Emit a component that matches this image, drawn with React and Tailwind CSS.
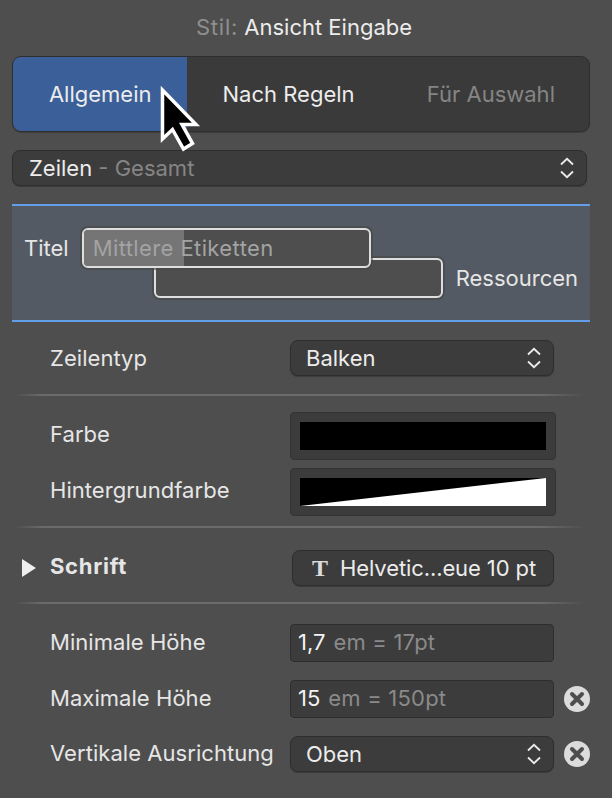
import React from 'react';

const font = { fontFamily: 'Inter, "Liberation Sans", sans-serif' };

function Stepper() {
  return (
    <svg width="14" height="22" viewBox="0 0 14 22" fill="none" stroke="#ececec" strokeWidth="1.8" className="shrink-0">
      <path d="M1 7.5 7 1.8l6 5.7" />
      <path d="M1 14.5l6 5.7 6-5.7" />
    </svg>
  );
}

function ClearButton() {
  return (
    <svg width="26" height="26" viewBox="0 0 26 26" className="shrink-0">
      <circle cx="13" cy="13" r="13" fill="#dcdcdc" />
      <path d="M8 8l10 10M18 8 8 18" stroke="#4e4e4e" strokeWidth="4" strokeLinecap="round" />
    </svg>
  );
}

function Select({ label, className }) {
  return (
    <div className={`flex items-center justify-between rounded-lg border border-[#2e2e2e] bg-[#3c3c3c] shadow-[0_1px_1px_rgba(0,0,0,0.25)] text-[#ececec] ${className}`}>
      {label}
      <Stepper />
    </div>
  );
}

function Divider() {
  return <div className="ml-[15px] h-[2px] w-[570px] bg-[linear-gradient(90deg,transparent,#6b6b6b_5%,#6b6b6b_92%,transparent)]" />;
}

function Row({ label, className, labelClass = '', children }) {
  return (
    <div className={`flex items-center ${className}`}>
      <span className={`ml-[50px] w-[240px] shrink-0 tracking-[0.05px] text-[#e6e6e6] ${labelClass}`}>{label}</span>
      {children}
    </div>
  );
}

function ColorWell({ children }) {
  return (
    <div className="h-[48px] w-[266px] rounded-[4px] border border-[#333] bg-[#3c3c3c] p-[9px]">
      <div className="h-[28px] w-[246px] bg-black">{children}</div>
    </div>
  );
}

function NumberField({ value, unit }) {
  return (
    <div className="flex h-[38px] w-[264px] items-center gap-[8px] rounded-[4px] border border-[#2e2e2e] bg-[#3c3c3c] pb-[2px] pl-[7px]">
      <span className="text-[#f2f2f2]">{value}</span>
      <span className="tracking-[0.2px] text-[#8a8a8a]">{unit}</span>
    </div>
  );
}

function Cursor() {
  return (
    <svg width="46" height="70" viewBox="0 0 46 70" className="absolute left-[158px] top-[84px] z-20">
      <path d="M4.5 6V55L14.5 45.5 25.5 65 34.5 59.5 24 40.5H38Z" fill="#000" stroke="#fff" strokeWidth="3.5" />
    </svg>
  );
}

export default function App() {
  return (
    <div className="relative h-[798px] w-[612px] overflow-hidden bg-[#4e4e4e] text-[22px] leading-none" style={font}>
      <div className="flex h-[56px] items-center justify-center gap-[6px] pb-[2px] pr-[4px]">
        <span className="tracking-[0.8px] text-[#8f8f8f]">Stil:</span>
        <span className="text-[#ececec]">Ansicht Eingabe</span>
      </div>

      {/* Tabs */}
      <div className="ml-[12px] flex h-[76px] w-[578px] overflow-hidden rounded-[9px] border border-[#2e2e2e] bg-[#3a3a3a] shadow-[0_1px_1px_rgba(0,0,0,0.2)]">
        <div className="flex w-[175px] items-center justify-center bg-[#3b5f98] text-[#ececec]">Allgemein</div>
        <div className="flex w-[203px] items-center justify-center text-[#ececec]">Nach Regeln</div>
        <div className="flex w-[200px] items-center justify-center pl-[3px] text-[#858585]">Für Auswahl</div>
      </div>
      <Cursor />

      <Select
        className="ml-[12px] mt-[18px] h-[36px] w-[575px] pl-[16px] pr-[12px]"
        label={
          <span>
            Zeilen <span className="text-[#858585]">- Gesamt</span>
          </span>
        }
      />

      {/* Drop band */}
      <div className="ml-[12px] mt-[18px] h-[118px] w-[578px] border-y-2 border-[#629fe8] bg-[#535a63] pl-[12px] pt-[22px]">
        <div className="flex">
          <span className="mr-[13px] mt-[9px] text-[#e6e6e6]">Titel</span>
          <div>
            <div className="relative z-10 flex h-[40px] w-[289px] items-center overflow-hidden rounded-[6px] border-2 border-[#dedede] bg-[#4e4e4e] shadow-[0_0_0_2px_rgba(70,70,70,0.6)]">
              <div className="flex h-full w-[100px] shrink-0 items-center whitespace-nowrap bg-[#757575] pb-[1px] pl-[9px] tracking-[0.4px] text-[#a3a3a3]">
                Mittlere Etiketten
              </div>
            </div>
            <div className="-mt-[10px] ml-[72px] flex items-center">
              <div className="h-[40px] w-[289px] rounded-[6px] border-2 border-[#dedede] bg-[#4e4e4e] shadow-[0_0_0_2px_rgba(70,70,70,0.6)]" />
              <span className="ml-[13px] text-[#e6e6e6]">Ressourcen</span>
            </div>
          </div>
        </div>
      </div>

      <Row label="Zeilentyp" className="mt-[18px]">
        <Select label="Balken" className="h-[36px] w-[264px] pl-[15px] pr-[12px]" />
      </Row>
      <div className="mt-[18px]"><Divider /></div>

      <Row label="Farbe" labelClass="pb-[5px]" className="mt-[16px]">
        <ColorWell />
      </Row>
      <Row label="Hintergrundfarbe" labelClass="pb-[5px]" className="mt-[8px]">
        <ColorWell>
          <svg width="246" height="28" viewBox="0 0 246 28" className="block">
            <polygon points="0,28 246,0 246,28" fill="#fff" />
          </svg>
        </ColorWell>
      </Row>
      <div className="mt-[10px]"><Divider /></div>

      <div className="mt-[22px] flex h-[36px] items-center">
        <div className="ml-[22px] h-0 w-0 border-y-[9px] border-l-[14px] border-y-transparent border-l-[#efefef]" />
        <span className="ml-[14px] w-[242px] shrink-0 pb-[5px] font-bold tracking-[0.7px] text-[#e6e6e6]">Schrift</span>
        <div className="flex h-[36px] w-[262px] items-center rounded-lg border border-[#2e2e2e] bg-[#3c3c3c] pl-[19px] text-[#ececec] shadow-[0_1px_1px_rgba(0,0,0,0.25)]">
          <span className="mr-[12px] text-[24px] font-bold text-[#dcdcdc]" style={{ fontFamily: '"Liberation Serif", serif' }}>T</span>
          <span className="tracking-[-0.1px]">Helvetic...eue 10 pt</span>
        </div>
      </div>
      <div className="mt-[16px]"><Divider /></div>

      <Row label="Minimale Höhe" labelClass="pb-[3px]" className="mt-[20px]">
        <NumberField value="1,7" unit="em = 17pt" />
      </Row>
      <Row label="Maximale Höhe" labelClass="pb-[3px]" className="mt-[18px]">
        <NumberField value="15" unit="em = 150pt" />
        <div className="ml-[10px]"><ClearButton /></div>
      </Row>
      <Row label="Vertikale Ausrichtung" labelClass="pb-[3px]" className="mt-[18px]">
        <Select label="Oben" className="h-[36px] w-[264px] pl-[15px] pr-[12px]" />
        <div className="ml-[10px]"><ClearButton /></div>
      </Row>
    </div>
  );
}
